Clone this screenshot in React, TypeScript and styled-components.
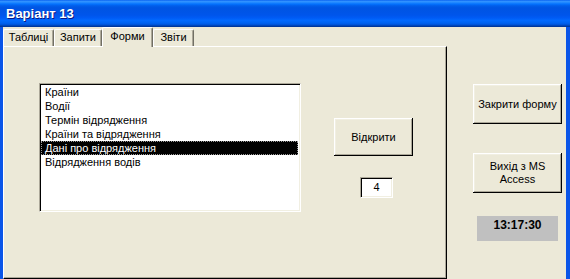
import React from 'react';
import styled, { createGlobalStyle } from 'styled-components';

const Global = createGlobalStyle`
  html, body { margin: 0; padding: 0; background: #ECE9D8; }
  body { font-family: "Liberation Sans", Arial, sans-serif; }
`;

const Window = styled.div`
  width: 570px;
  height: 279px;
  overflow: hidden;
  display: flex;
  flex-direction: column;
  background: #ECE9D8;
`;

const TitleBar = styled.div`
  height: 27px;
  flex: none;
  display: flex;
  align-items: center;
  padding-left: 6px;
  color: #fff;
  font: bold 13px "Liberation Sans", Arial, sans-serif;
  text-shadow: 1px 1px 0 #0A1883;
  background: linear-gradient(to bottom, #0058EE 0%, #3593FF 4%, #288EFF 8%, #127DFF 12%, #036FFC 16%, #0262EE 20%, #0057E5 26%, #0054E3 32%, #0055EB 56%, #005BF5 66%, #026AFE 76%, #0062EF 86%, #0052D6 92%, #0040AB 96%, #003092 100%);
`;

const Frame = styled.div`
  flex: 1;
  display: flex;
  border-left: 3px solid #0A55E8;
  border-right: 4px solid #0A55E8;
  min-height: 0;
`;

const TabControl = styled.div`
  width: 444px;
  flex: none;
  display: flex;
  flex-direction: column;
`;

const TabStrip = styled.div`
  height: 19px;
  flex: none;
  display: flex;
  align-items: flex-end;
  position: relative;
  z-index: 1;
`;

const Tab = styled.div<{ $w: number; $active?: boolean }>`
  box-sizing: border-box;
  width: ${p => p.$w}px;
  height: ${p => (p.$active ? 20 : 17)}px;
  margin-bottom: ${p => (p.$active ? -1 : 0)}px;
  background: #ECE9D8;
  border-top: 1px solid #fff;
  border-left: 1px solid #fff;
  border-right: 1px solid #716F64;
  box-shadow: inset -1px 0 0 #ACA899;
  border-radius: 2px 2px 0 0;
  font-size: 11px;
  color: #000;
  display: flex;
  justify-content: center;
  padding-top: ${p => (p.$active ? 2 : 1)}px;
  line-height: 13px;
`;

const Panel = styled.div`
  flex: 1;
  box-sizing: border-box;
  border-top: 1px solid #fff;
  border-left: 1px solid #fff;
  border-right: 1px solid #000;
  border-bottom: 1px solid #000;
  box-shadow: inset -1px -1px 0 #ACA899;
  display: flex;
  align-items: flex-start;
  padding: 36px 0 0 35px;
`;

const ListBox = styled.div`
  box-sizing: border-box;
  width: 262px;
  height: 129px;
  background: #fff;
  border-top: 1px solid #ACA899;
  border-left: 1px solid #ACA899;
  border-right: 1px solid #fff;
  border-bottom: 1px solid #fff;
  box-shadow: inset 1px 1px 0 #000, inset -1px -1px 0 #F1EFE2;
  padding: 1px 2px 1px 1px;
  display: flex;
  flex-direction: column;
`;

const Item = styled.div<{ $selected?: boolean }>`
  box-sizing: border-box;
  height: 14px;
  line-height: 12px;
  font-size: 11px;
  padding-left: 3px;
  white-space: nowrap;
  color: ${p => (p.$selected ? '#fff' : '#000')};
  background: ${p => (p.$selected ? '#000' : 'transparent')};
  border: 1px dotted ${p => (p.$selected ? '#9a9a9a' : 'transparent')};
`;

const ActionColumn = styled.div`
  display: flex;
  flex-direction: column;
  align-items: flex-start;
  margin: 35px 0 0 33px;
`;

const Button = styled.button<{ $w: number; $h: number }>`
  box-sizing: border-box;
  width: ${p => p.$w}px;
  height: ${p => p.$h}px;
  background: #ECE9D8;
  border: none;
  padding: 0 4px;
  margin: 0;
  font: 11px "Liberation Sans", Arial, sans-serif;
  color: #000;
  line-height: 13px;
  text-align: center;
  box-shadow: inset -1px -1px 0 #000, inset 1px 1px 0 #fff, inset -2px -2px 0 #ACA899, inset 2px 2px 0 #F1EFE2;
`;

const NumberField = styled.div`
  box-sizing: border-box;
  width: 33px;
  height: 21px;
  margin: 21px 0 0 26px;
  background: #fff;
  border-top: 1px solid #ACA899;
  border-left: 1px solid #ACA899;
  border-right: 1px solid #fff;
  border-bottom: 1px solid #fff;
  box-shadow: inset 1px 1px 0 #000, inset -1px -1px 0 #F1EFE2;
  font-size: 11px;
  display: flex;
  justify-content: center;
  align-items: center;
  padding-bottom: 1px;
`;

const SideColumn = styled.div`
  display: flex;
  flex-direction: column;
  align-items: flex-start;
  gap: 29px;
  padding: 57px 0 0 26px;
`;

const Clock = styled.div`
  width: 81px;
  height: 25px;
  box-sizing: border-box;
  margin: -6px 0 0 4px;
  background: #C0C0C0;
  font: bold 12px "Liberation Sans", Arial, sans-serif;
  color: #000;
  text-align: center;
  padding-top: 2px;
`;

const items = [
  'Країни',
  'Водії',
  'Термін відрядження',
  'Країни та відрядження',
  'Дані про відрядження',
  'Відрядження водів',
];

export default function App() {
  return (
    <>
      <Global />
      <Window>
        <TitleBar>Варіант 13</TitleBar>
        <Frame>
          <TabControl>
            <TabStrip>
              <Tab $w={51}>Таблиці</Tab>
              <Tab $w={48}>Запити</Tab>
              <Tab $w={51} $active>Форми</Tab>
              <Tab $w={41}>Звіти</Tab>
            </TabStrip>
            <Panel>
              <ListBox>
                {items.map((t, i) => (
                  <Item key={t} $selected={i === 4}>{t}</Item>
                ))}
              </ListBox>
              <ActionColumn>
                <Button $w={79} $h={38}>Відкрити</Button>
                <NumberField>4</NumberField>
              </ActionColumn>
            </Panel>
          </TabControl>
          <SideColumn>
            <Button $w={89} $h={40}>Закрити форму</Button>
            <Button $w={89} $h={40}>Вихід з MS<br />Access</Button>
            <Clock>13:17:30</Clock>
          </SideColumn>
        </Frame>
      </Window>
    </>
  );
}
